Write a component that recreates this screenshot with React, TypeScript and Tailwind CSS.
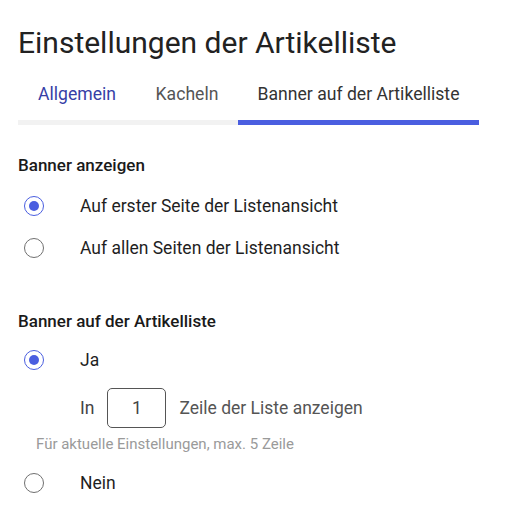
import React from "react";

function Radio({ checked }: { checked: boolean }) {
  return checked ? (
    <span className="flex h-[20px] w-[20px] items-center justify-center rounded-full border-[1.5px] border-[#4a5ee0]">
      <span className="h-[10px] w-[10px] rounded-full bg-[#4a5ee0]" />
    </span>
  ) : (
    <span className="h-[20px] w-[20px] rounded-full border-[1.5px] border-[#707070]" />
  );
}

function Option({ checked, label }: { checked: boolean; label: string }) {
  return (
    <div className="flex h-[42px] items-center">
      <div className="flex w-[62px] pl-[6px]">
        <Radio checked={checked} />
      </div>
      <span className="text-[17.5px] leading-[24px] text-[#1f1f1f]">{label}</span>
    </div>
  );
}

export default function App() {
  return (
    <div className="min-h-[532px] bg-white pl-[18px] pr-[34px] pt-[25px]" style={{ fontFamily: "Roboto, 'Noto Sans', sans-serif" }}>
      <h1 className="text-[30px] leading-[36px] font-normal text-[#222222]">Einstellungen der Artikelliste</h1>
      <div className="mt-[21px] flex text-[17.6px] leading-[24px]">
        <div className="flex w-[118px] justify-center border-b-[5px] border-[#f2f2f2] pb-[14px] text-[#363ea6]">Allgemein</div>
        <div className="flex w-[102px] justify-center border-b-[5px] border-[#f2f2f2] pb-[14px] text-[#555555]">Kacheln</div>
        <div className="flex w-[241px] justify-center border-b-[5px] border-[#4a5ee0] pb-[14px] text-[#333333]">Banner auf der Artikelliste</div>
      </div>
      <div className="mt-[28px] text-[17px] leading-[24px] font-medium text-[#1a1a1a]">Banner anzeigen</div>
      <div className="mt-[8px]">
        <Option checked label="Auf erster Seite der Listenansicht" />
        <Option checked={false} label="Auf allen Seiten der Listenansicht" />
      </div>
      <div className="mt-[40px] text-[17px] leading-[24px] font-medium text-[#1a1a1a]">Banner auf der Artikelliste</div>
      <div className="mt-[6px]">
        <Option checked label="Ja" />
        <div className="mt-[7px] flex h-[40px] items-center pl-[62px]">
          <span className="text-[17.5px] text-[#444444]">In</span>
          <div className="ml-[13px] flex h-[40px] w-[59px] items-center justify-center rounded-[5px] border border-[#555555] text-[17.5px] text-[#444444]">1</div>
          <span className="ml-[13px] text-[17.5px] text-[#555555]">Zeile der Liste anzeigen</span>
        </div>
        <div className="mt-[6px] pl-[18px] text-[15px] leading-[20px] text-[#9a9a9a]">Für aktuelle Einstellungen, max. 5 Zeile</div>
        <div className="mt-[8px]">
          <Option checked={false} label="Nein" />
        </div>
      </div>
    </div>
  );
}
